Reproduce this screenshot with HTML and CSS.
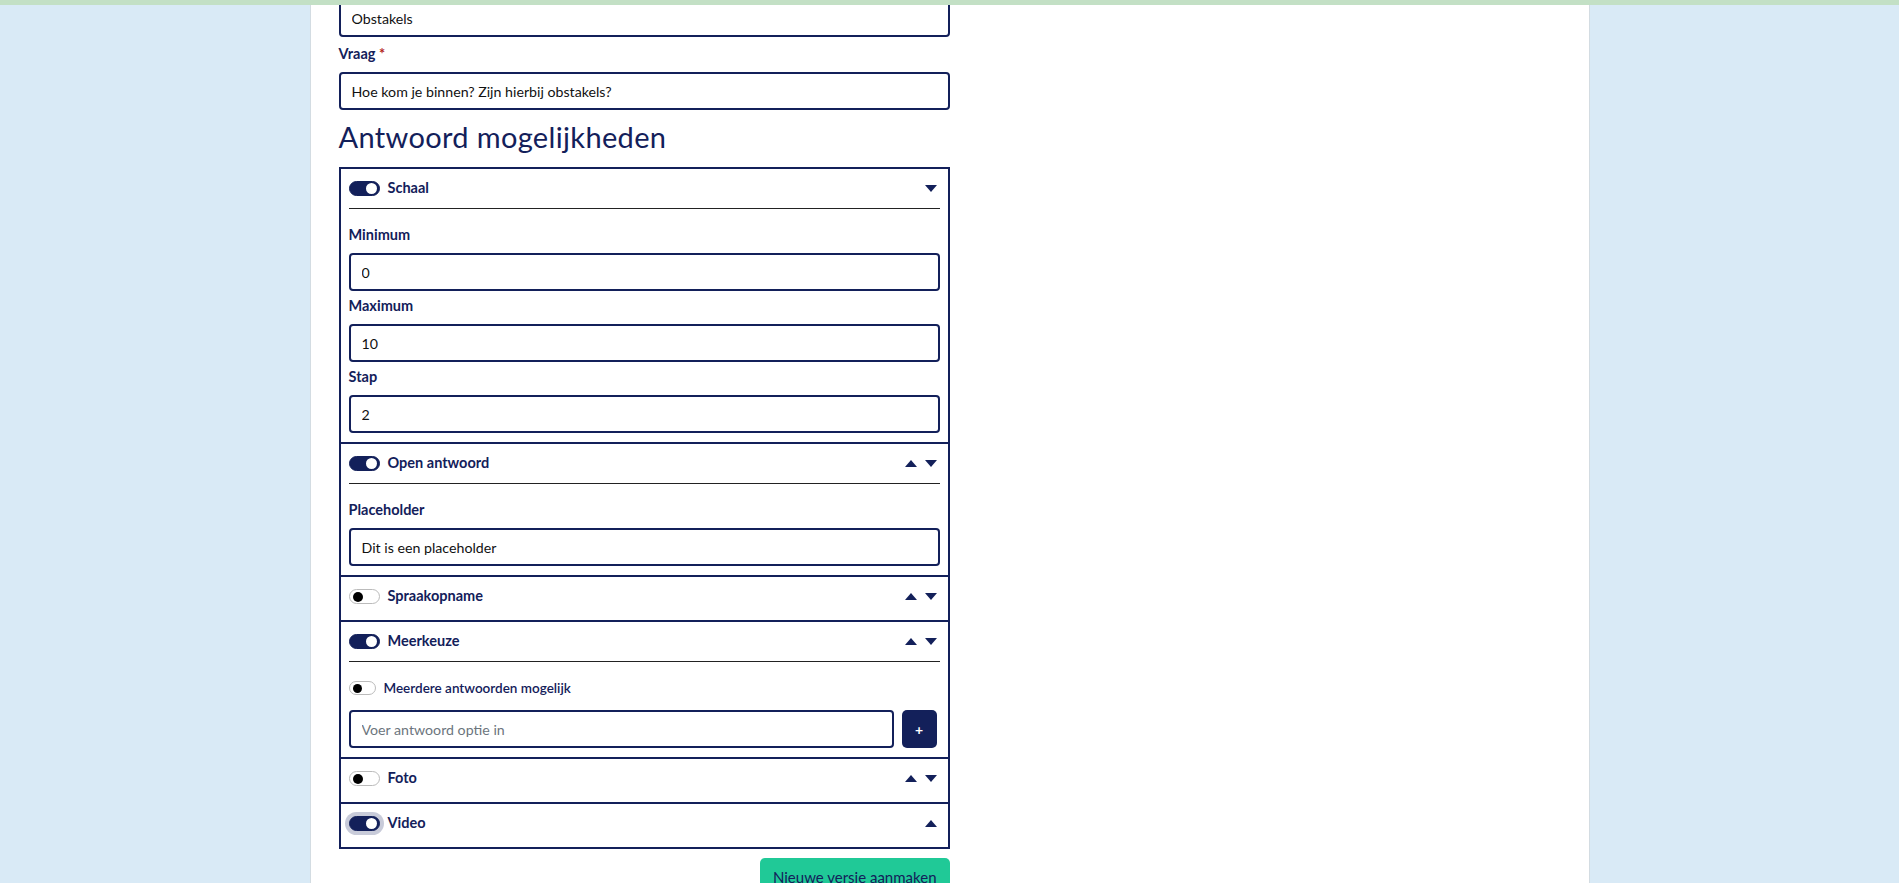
FILE: index.html
```html
<!DOCTYPE html>
<html lang="nl">

<head>
  <meta charset="UTF-8">
  <meta name="viewport" content="width=device-width, initial-scale=1.0">
  <title>Vraag bewerken</title>
  <link rel="stylesheet" href="styles.css">
</head>

<body>
  <div class="topbar"></div>

  <div class="page">
    <main class="sheet">
      <form class="question-form">
        <input class="field" type="text" name="title" value="Obstakels">

        <label class="label" for="question">Vraag <span class="req">*</span></label>
        <input class="field" type="text" id="question" name="question" value="Hoe kom je binnen? Zijn hierbij obstakels?">

        <h2 class="section-title">Antwoord mogelijkheden</h2>

        <div class="options">
          <!-- schaal -->
          <div class="option">
            <div class="option-head">
              <input type="checkbox" class="switch" checked>
              <span class="option-name">Schaal</span>
              <div class="order">
                <svg class="caret" viewBox="0 0 12 7"><path d="M0 0H12L6 7Z" /></svg>
              </div>
            </div>
            <div class="option-body">
              <label class="label">Minimum</label>
              <input class="field" type="text" value="0">
              <label class="label">Maximum</label>
              <input class="field" type="text" value="10">
              <label class="label">Stap</label>
              <input class="field" type="text" value="2">
            </div>
          </div>

          <!-- open antwoord -->
          <div class="option">
            <div class="option-head">
              <input type="checkbox" class="switch" checked>
              <span class="option-name">Open antwoord</span>
              <div class="order">
                <svg class="caret" viewBox="0 0 12 7"><path d="M0 7H12L6 0Z" /></svg>
                <svg class="caret" viewBox="0 0 12 7"><path d="M0 0H12L6 7Z" /></svg>
              </div>
            </div>
            <div class="option-body">
              <label class="label">Placeholder</label>
              <input class="field" type="text" value="Dit is een placeholder">
            </div>
          </div>

          <!-- spraakopname -->
          <div class="option">
            <div class="option-head">
              <input type="checkbox" class="switch">
              <span class="option-name">Spraakopname</span>
              <div class="order">
                <svg class="caret" viewBox="0 0 12 7"><path d="M0 7H12L6 0Z" /></svg>
                <svg class="caret" viewBox="0 0 12 7"><path d="M0 0H12L6 7Z" /></svg>
              </div>
            </div>
          </div>

          <!-- meerkeuze -->
          <div class="option">
            <div class="option-head">
              <input type="checkbox" class="switch" checked>
              <span class="option-name">Meerkeuze</span>
              <div class="order">
                <svg class="caret" viewBox="0 0 12 7"><path d="M0 7H12L6 0Z" /></svg>
                <svg class="caret" viewBox="0 0 12 7"><path d="M0 0H12L6 7Z" /></svg>
              </div>
            </div>
            <div class="option-body">
              <div class="multi">
                <input type="checkbox" class="switch switch-sm">
                <span class="multi-label">Meerdere antwoorden mogelijk</span>
              </div>
              <div class="add-row">
                <input class="field" type="text" placeholder="Voer antwoord optie in">
                <button class="btn-add" type="button">+</button>
              </div>
            </div>
          </div>

          <!-- foto -->
          <div class="option">
            <div class="option-head">
              <input type="checkbox" class="switch">
              <span class="option-name">Foto</span>
              <div class="order">
                <svg class="caret" viewBox="0 0 12 7"><path d="M0 7H12L6 0Z" /></svg>
                <svg class="caret" viewBox="0 0 12 7"><path d="M0 0H12L6 7Z" /></svg>
              </div>
            </div>
          </div>

          <!-- video -->
          <div class="option">
            <div class="option-head">
              <input type="checkbox" class="switch focused" checked>
              <span class="option-name">Video</span>
              <div class="order">
                <svg class="caret" viewBox="0 0 12 7"><path d="M0 7H12L6 0Z" /></svg>
              </div>
            </div>
          </div>
        </div>

        <div class="actions">
          <button class="btn-save" type="button">Nieuwe versie aanmaken</button>
        </div>
      </form>
    </main>
  </div>
</body>

</html>
```

FILE: styles.css
```css
body {
  margin: 0;
  font-family: Lato, 'Open Sans', sans-serif;
  font-size: 14px;
  color: #111;
  background: #d9eaf6;
}

.topbar {
  position: fixed;
  top: 0;
  left: 0;
  right: 0;
  height: 5px;
  background: #c3e0c5;
  z-index: 10;
}

.page {
  display: flex;
  justify-content: center;
}

.sheet {
  width: 1278px;
  min-height: 100vh;
  background: #fff;
  box-shadow: -1px 0 0 #d3dce2, 1px 0 0 #d3dce2;
  padding-left: 28px;
  box-sizing: border-box;
}

.question-form {
  width: 611px;
  margin-top: -1px;
}

.field {
  display: block;
  box-sizing: border-box;
  width: 100%;
  height: 38px;
  padding: 0 11px;
  border: 2px solid #13205a;
  border-radius: 4px;
  background: #fff;
  font-family: Lato, 'Open Sans', sans-serif;
  font-size: 14.2px;
  color: #111;
  outline: none;
  margin: 0 0 7px;
}

.field::placeholder {
  color: #6c757d;
}

.label {
  display: block;
  font-weight: 700;
  font-size: 14.5px;
  line-height: 20px;
  color: #13205a;
  margin-bottom: 8px;
}

.req {
  color: #b3261e;
}

.section-title {
  font-weight: 400;
  font-size: 29px;
  letter-spacing: 0.35px;
  line-height: 32px;
  color: #13205a;
  margin: 11px 0 14px;
}

.options {
  border: 2px solid #13205a;
}

.option {
  padding: 0 8px 4px;
}

.option + .option {
  border-top: 2px solid #13205a;
}

.option-head {
  display: flex;
  align-items: center;
  gap: 8px;
  height: 39px;
}

.option-name {
  font-weight: 700;
  font-size: 14.5px;
  line-height: 18px;
  margin-top: -2px;
  color: #13205a;
}

.order {
  margin-left: auto;
  margin-right: 3px;
  display: flex;
  align-items: center;
  gap: 8px;
}

.caret {
  width: 12px;
  height: 7px;
  fill: #13205a;
}

.option-body {
  border-top: 1px solid #222;
  padding-top: 16px;
}

.option-body .field {
  margin-bottom: 5px;
}

/* switches */
.switch {
  -webkit-appearance: none;
  appearance: none;
  position: relative;
  flex: none;
  width: 31px;
  height: 15px;
  margin: 0;
  border: 1px solid #bbb;
  border-radius: 8px;
  background: #fff;
  box-sizing: border-box;
}

.switch::after {
  content: "";
  position: absolute;
  top: 2px;
  left: 3px;
  width: 10px;
  height: 10px;
  top: 1.5px;
  border-radius: 50%;
  background: #000;
}

.switch:checked {
  background: #13205a;
  border-color: #13205a;
}

.switch:checked::after {
  top: 1px;
  left: auto;
  right: 2px;
  width: 11px;
  height: 11px;
  background: #fff;
}

.switch.focused {
  box-shadow: 0 0 0 4px #c8cbd9;
}

.switch-sm {
  width: 27px;
  height: 14px;
}

.switch-sm::after {
  width: 9px;
  height: 9px;
}

.multi {
  display: flex;
  align-items: center;
  gap: 8px;
  height: 20px;
  margin-bottom: 12px;
}

.multi-label {
  font-weight: 600;
  font-size: 13.5px;
  color: #13205a;
}

.add-row {
  display: flex;
  gap: 8px;
  margin-bottom: 5px;
}

.add-row .field {
  flex: 1;
  margin: 0;
}

.btn-add {
  width: 35px;
  height: 38px;
  margin-right: 3px;
  border: none;
  border-radius: 5px;
  background: #13205a;
  color: #fff;
  font-family: Lato, sans-serif;
  font-weight: 700;
  font-size: 14px;
}

.actions {
  display: flex;
  justify-content: flex-end;
  margin-top: 9px;
}

.btn-save {
  border: none;
  border-radius: 5px;
  background: #20c997;
  color: #13205a;
  font-family: Lato, sans-serif;
  font-size: 15px;
  line-height: 20px;
  padding: 9px 13px;
}
```
